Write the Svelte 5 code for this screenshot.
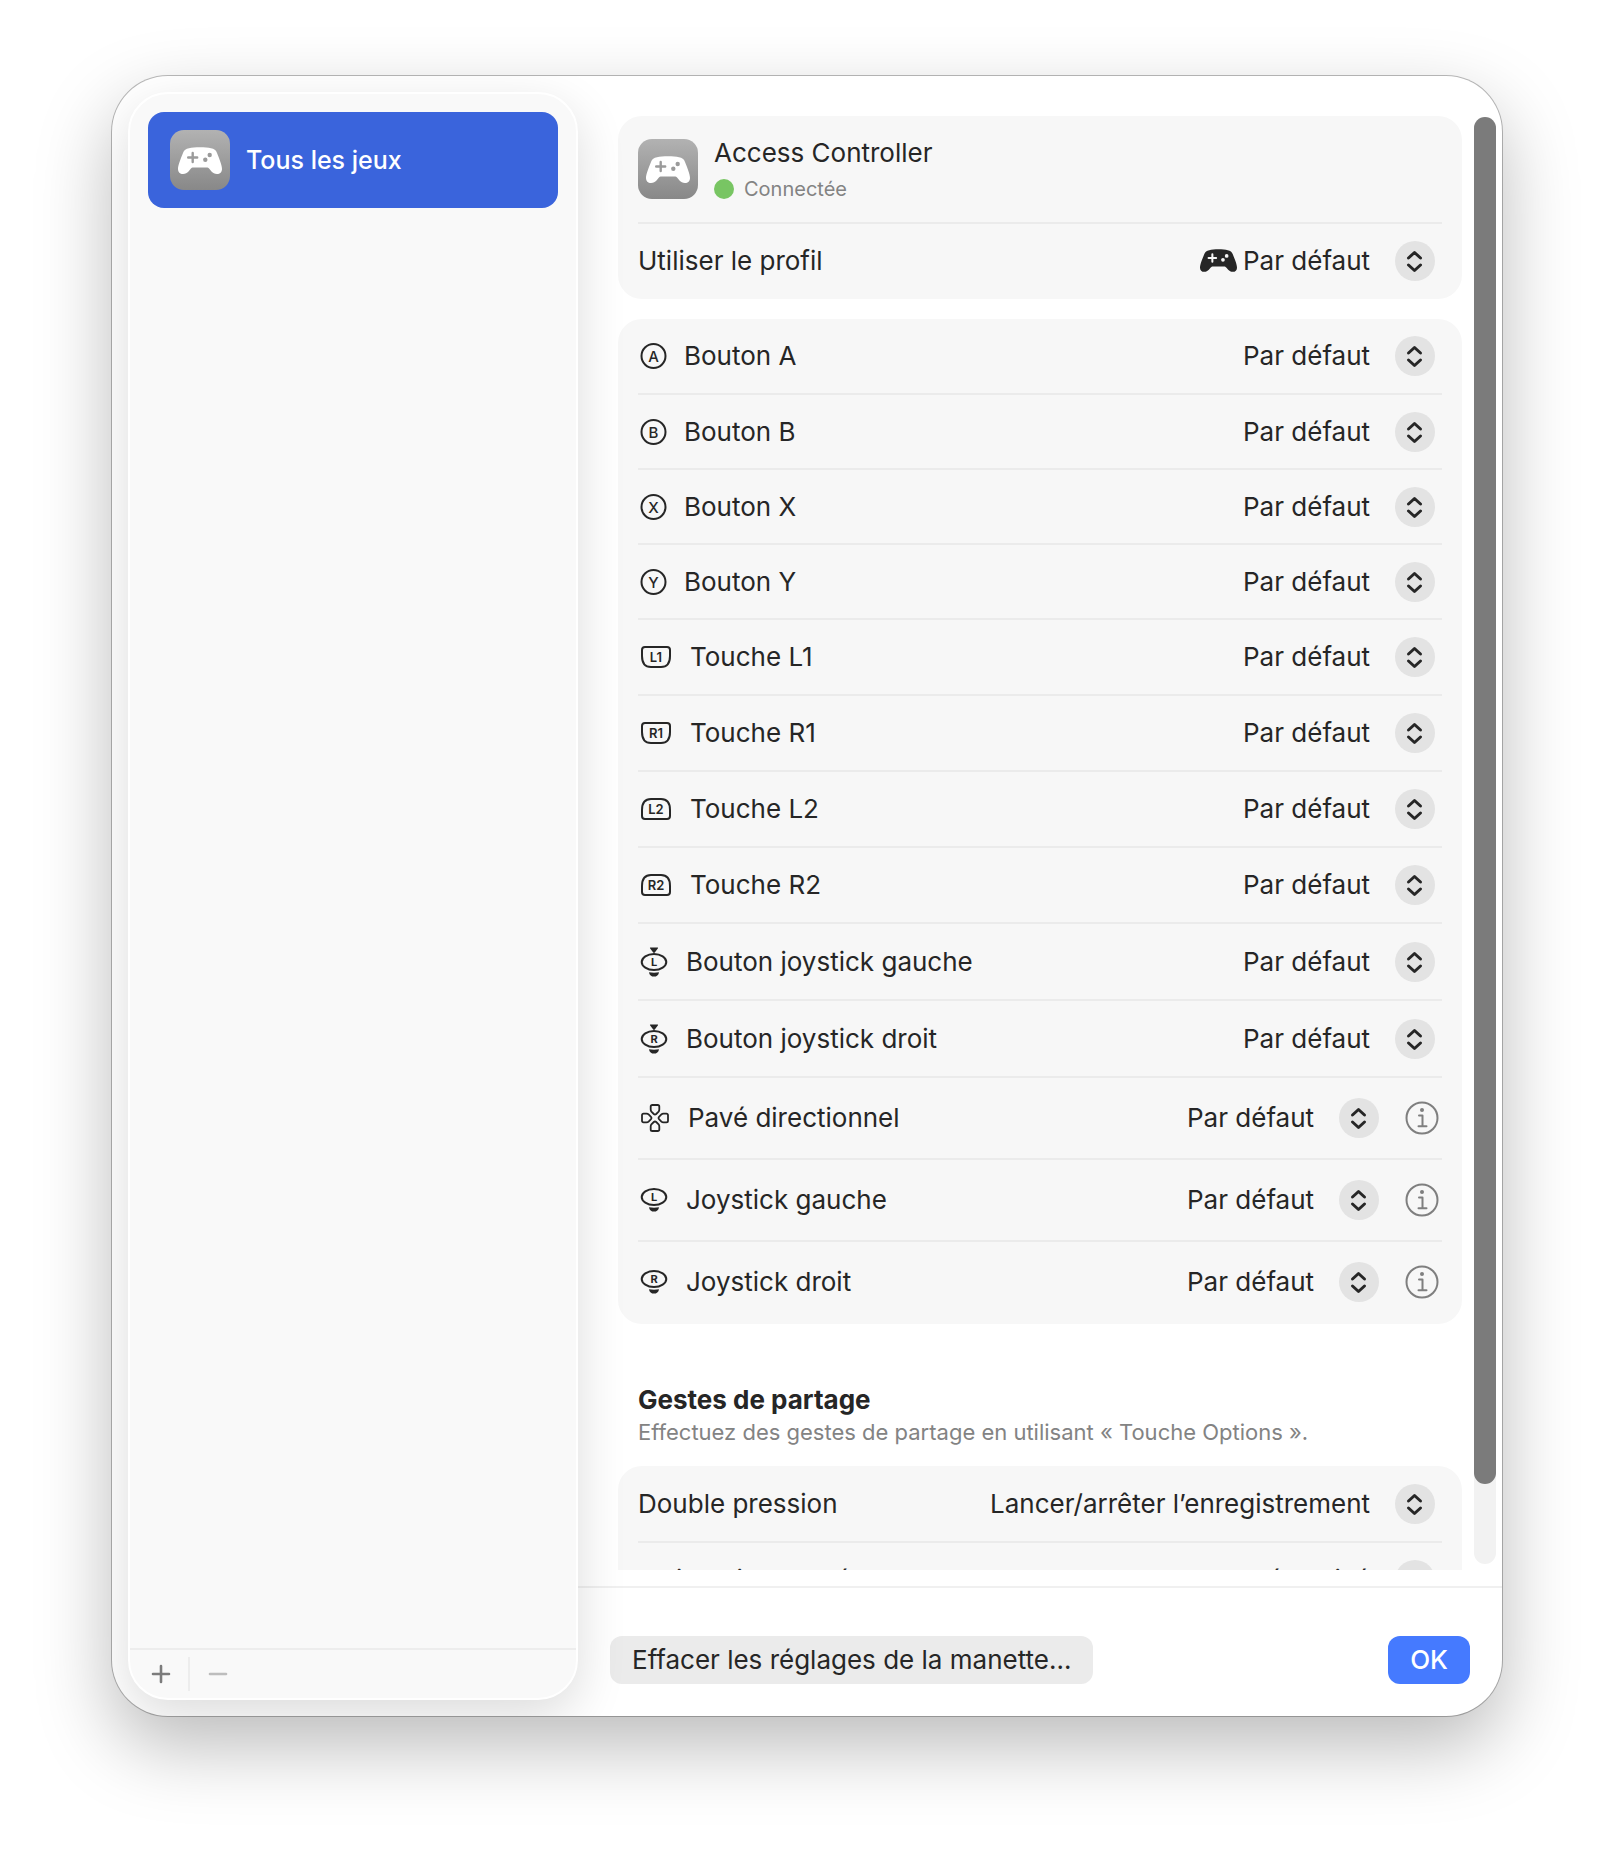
<script>
	const buttons = [
		{ id: 'a', label: 'Bouton A', icon: 'face', mark: 'A' },
		{ id: 'b', label: 'Bouton B', icon: 'face', mark: 'B' },
		{ id: 'x', label: 'Bouton X', icon: 'face', mark: 'X' },
		{ id: 'y', label: 'Bouton Y', icon: 'face', mark: 'Y' },
		{ id: 'l1', label: 'Touche L1', icon: 'bumper', mark: 'L1' },
		{ id: 'r1', label: 'Touche R1', icon: 'bumper', mark: 'R1' },
		{ id: 'l2', label: 'Touche L2', icon: 'trigger', mark: 'L2' },
		{ id: 'r2', label: 'Touche R2', icon: 'trigger', mark: 'R2' },
		{ id: 'l3', label: 'Bouton joystick gauche', icon: 'press', mark: 'L' },
		{ id: 'r3', label: 'Bouton joystick droit', icon: 'press', mark: 'R' },
		{ id: 'dpad', label: 'Pavé directionnel', icon: 'dpad', info: true },
		{ id: 'ls', label: 'Joystick gauche', icon: 'stick', mark: 'L', info: true },
		{ id: 'rs', label: 'Joystick droit', icon: 'stick', mark: 'R', info: true }
	];

	const gestures = [
		{ id: 'double', label: 'Double pression', value: 'Lancer/arrêter l’enregistrement' },
		{ id: 'hold', label: 'Maintenir appuyé', value: 'Désactivé' }
	];

	let scroller = $state();
	let thumbHeight = $state(94);
	let thumbTop = $state(0);

	function updateThumb() {
		if (!scroller) return;
		thumbHeight = (scroller.clientHeight / scroller.scrollHeight) * 100;
		thumbTop = (scroller.scrollTop / scroller.scrollHeight) * 100;
	}

	$effect(updateThumb);
</script>

<svelte:window onresize={updateThumb} />

{#snippet gamepad()}
	<svg class="gamepad" viewBox="0 0 44 27" aria-hidden="true">
		<path
			class="pad-body"
			d="M11 1.2C16-.2 28-.2 33 1.2c3 .4 5 1.8 6 4.800 2 5 5 12 5 16 0 3-2 5-5 5-2.500 0-4-1-5.500-2.500L31.500 22c-1-1.200-1.700-1.500-3-1.500h-13c-1.300 0-2 .3-3 1.500l-2 2.500C9 26 7.500 27 5 27c-3 0-5-2-5-5 0-4 3-11 5-16 1-3 3-4.400 6-4.800z"
		/>
		<path class="pad-cross" d="M14.700 6v9M10.200 10.500h9" />
		<circle class="pad-dot" cx="27.300" cy="12.700" r="2.200" />
		<circle class="pad-dot" cx="31.700" cy="8" r="2.200" />
	</svg>
{/snippet}

{#snippet glyph(icon, mark)}
	{#if icon === 'face'}
		<svg class="glyph" width="30" height="28" viewBox="0 0 30 28" aria-hidden="true">
			<circle cx="15.500" cy="14" r="12" />
			<text class="mark" x="15.500" y="19.500">{mark}</text>
		</svg>
	{:else if icon === 'bumper' || icon === 'trigger'}
		<svg class="glyph" width="36" height="24" viewBox="0 0 36 24" aria-hidden="true">
			{#if icon === 'bumper'}
				<path d="M7 2h22q3 0 3 3v6c0 8-4 11-9 11H13c-5 0-9-3-9-11V5q0-3 3-3z" />
			{:else}
				<path d="M7 22h22q3 0 3-3v-6c0-8-4-11-9-11H13c-5 0-9 3-9 11v6q0 3 3 3z" />
			{/if}
			<text class="mark small" x="18" y="16.500">{mark}</text>
		</svg>
	{:else if icon === 'press'}
		<svg class="glyph" width="32" height="30" viewBox="0 0 32 30" aria-hidden="true">
			<path class="solid" d="M12.300.5h7.400q.6 0 .3.700l-3.200 4.300q-.8.900-1.600 0L12 1.200q-.3-.7.300-.7z" />
			<ellipse cx="16" cy="15" rx="12.300" ry="8" />
			<path class="solid" d="M11 25.200q5 .9 10 0c-.3 3-2.500 4.400-5 4.400s-4.700-1.400-5-4.400z" />
			<text class="mark tiny" x="16" y="19">{mark}</text>
		</svg>
	{:else if icon === 'stick'}
		<svg class="glyph" width="32" height="24" viewBox="0 0 32 24" aria-hidden="true">
			<ellipse cx="16" cy="9" rx="12.300" ry="8" />
			<path class="solid" d="M11 19.200q5 .9 10 0c-.3 3-2.500 4.400-5 4.400s-4.700-1.400-5-4.400z" />
			<text class="mark tiny" x="16" y="13">{mark}</text>
		</svg>
	{:else}
		<svg class="glyph thin" width="34" height="30" viewBox="0 0 34 30" aria-hidden="true">
			{#each [0, 90, 180, 270] as angle}
				<path
					transform="rotate({angle} 17 15)"
					d="M14.300 2h5.400q1.600 0 1.600 1.600v3q0 1.200-.7 2l-2.400 2.400q-1.200 1.100-2.400 0l-2.400-2.400q-.7-.8-.7-2v-3q0-1.600 1.600-1.600z"
				/>
			{/each}
		</svg>
	{/if}
{/snippet}

{#snippet picker(id, value)}
	<span class="picker">
		<select {id}>
			<option>{value}</option>
		</select>
		<span class="stepper">
			<svg width="40" height="40" viewBox="0 0 40 40" aria-hidden="true">
				<path d="M13.500 17l6-5.500 6 5.500M13.500 24l6 5.500 6-5.500" />
			</svg>
		</span>
	</span>
{/snippet}

<div class="window">
	<aside class="sidebar">
		<nav>
			<a class="game" href="#all" aria-current="page">
				<span class="tile">{@render gamepad()}</span>
				Tous les jeux
			</a>
		</nav>
		<div class="toolbar">
			<button class="add" aria-label="Ajouter">
				<svg width="20" height="20" viewBox="0 0 20 20"><path d="M10 2v16M2 10h16" /></svg>
			</button>
			<button class="remove" aria-label="Supprimer" disabled>
				<svg width="20" height="20" viewBox="0 0 20 20"><path d="M2 10h16" /></svg>
			</button>
		</div>
	</aside>

	<main>
		<div class="content">
			<div class="scroller" bind:this={scroller} onscroll={updateThumb}>
				<section class="card">
					<div class="row device">
						<span class="tile">{@render gamepad()}</span>
						<div>
							<div class="name">Access Controller</div>
							<div class="status"><span class="led"></span>Connectée</div>
						</div>
					</div>
					<div class="row">
						<label for="profile">Utiliser le profil</label>
						<span class="profile">{@render gamepad()}</span>
						{@render picker('profile', 'Par défaut')}
					</div>
				</section>

				<section class="card">
					{#each buttons as { id, label, icon, mark, info } (id)}
						<div class="row {icon}">
							{@render glyph(icon, mark)}
							<label for={id}>{label}</label>
							{@render picker(id, 'Par défaut')}
							{#if info}
								<button class="info" aria-label="Informations">
									<svg width="34" height="34" viewBox="0 0 34 34">
										<circle cx="17" cy="17" r="15.500" />
										<circle class="dot" cx="17" cy="9" r="2" />
										<path d="M14 14.500h3.500V25M13.500 25.200h8" />
									</svg>
								</button>
							{/if}
						</div>
					{/each}
				</section>

				<header>
					<h2>Gestes de partage</h2>
					<p>Effectuez des gestes de partage en utilisant «&nbsp;Touche Options&nbsp;».</p>
				</header>
				<section class="card">
					{#each gestures as { id, label, value } (id)}
						<div class="row bumper">
							<label for={id}>{label}</label>
							{@render picker(id, value)}
						</div>
					{/each}
				</section>
			</div>
			<div class="track">
				<div class="thumb" style="height: {thumbHeight}%; top: {thumbTop}%"></div>
			</div>
		</div>

		<footer>
			<button class="push">Effacer les réglages de la manette…</button>
			<button class="push primary">OK</button>
		</footer>
	</main>
</div>

<style>
	:global(body) {
		margin: 0;
		background: #fff;
	}

	.window,
	.window * {
		box-sizing: border-box;
	}

	.window {
		display: flex;
		height: calc(100vh - 224px);
		min-height: 600px;
		margin: 76px 112px 148px;
		border-radius: 56px;
		background: #fff;
		box-shadow:
			0 0 0 1px rgba(0, 0, 0, 0.26),
			0 30px 76px rgba(0, 0, 0, 0.27);
		overflow: hidden;
		color: #262626;
		font-family: Inter, 'Liberation Sans', sans-serif;
		font-size: 26px;
		line-height: 32px;
	}

	button,
	select {
		margin: 0;
		padding: 0;
		border: 0;
		background: none;
		color: inherit;
		font: inherit;
	}

	svg {
		display: block;
		fill: none;
		stroke: currentColor;
		stroke-width: 2;
		stroke-linecap: round;
		stroke-linejoin: round;
	}

	.sidebar {
		position: relative;
		z-index: 1;
		display: flex;
		flex: 0 0 450px;
		flex-direction: column;
		justify-content: space-between;
		margin: 16px 0 16px 16px;
		border: 2px solid #fff;
		border-radius: 40px;
		background: #f9f9f9;
		box-shadow: 0 16px 50px rgba(0, 0, 0, 0.14);
	}

	nav {
		padding: 18px;
	}

	.game {
		display: flex;
		align-items: center;
		gap: 16px;
		height: 96px;
		padding: 0 22px;
		border-radius: 16px;
		background: #3a64dc;
		color: #fff;
		font-size: 25px;
		font-weight: 500;
		text-decoration: none;
	}

	.tile {
		display: flex;
		flex: none;
		align-items: center;
		justify-content: center;
		width: 60px;
		height: 60px;
		border-radius: 14px;
		background: linear-gradient(#b2b2b2, #888);
		color: #fff;
		--pad-detail: #9b9b9b;
	}

	.gamepad {
		width: 44px;
		height: 27px;
	}

	.pad-body {
		fill: currentColor;
		stroke: none;
	}

	.pad-cross {
		stroke: var(--pad-detail);
		stroke-width: 2.4;
	}

	.pad-dot {
		fill: var(--pad-detail);
		stroke: none;
	}

	.toolbar {
		display: flex;
		align-items: center;
		height: 50px;
		border-top: 2px solid #ededed;
		color: #7c7c7c;
	}

	.toolbar button {
		display: flex;
		align-items: center;
		justify-content: center;
		height: 34px;
	}

	.toolbar svg {
		stroke-width: 2.6;
	}

	.add {
		width: 60px;
		padding-left: 4px;
		border-right: 2px solid #ededed;
	}

	.remove {
		width: 56px;
		color: #bdbdbd;
	}

	main {
		display: flex;
		flex: 1;
		flex-direction: column;
		min-width: 0;
	}

	.content {
		display: flex;
		flex: 1;
		gap: 12px;
		min-height: 0;
		padding: 0 6px 16px 40px;
	}

	.scroller {
		flex: 1;
		min-width: 0;
		padding: 40px 0 38px;
		overflow-y: auto;
		scrollbar-width: none;
	}

	.track {
		position: relative;
		flex: 0 0 22px;
		margin: 41px 0 6px;
		border-radius: 11px;
		background: #f2f2f2;
	}

	.thumb {
		position: absolute;
		left: 0;
		right: 0;
		border-radius: 11px;
		background: #7b7b7b;
	}

	.card {
		padding: 0 20px;
		border-radius: 24px;
		background: #f7f7f7;
	}

	.card + .card {
		margin-top: 20px;
	}

	.row {
		display: flex;
		align-items: center;
		height: 75px;
		border-bottom: 2px solid #ebebeb;
	}

	.row.face:first-child {
		height: 76px;
	}

	.row.device {
		align-items: flex-start;
		gap: 16px;
		height: 108px;
		padding-top: 23px;
	}

	.row.bumper,
	.row.trigger {
		height: 76px;
	}

	.row.bumper:first-child,
	.row.press {
		height: 77px;
	}

	.row.dpad,
	.row.stick {
		height: 82px;
	}

	.row:last-child {
		border-bottom-color: transparent;
	}

	label {
		flex: 1;
		white-space: nowrap;
	}

	.device > div {
		margin-top: -2px;
	}

	.status {
		display: flex;
		align-items: center;
		gap: 10px;
		margin-top: 4px;
		color: #838383;
		font-size: 20px;
	}

	.led {
		width: 20px;
		height: 20px;
		border-radius: 50%;
		background: #78c563;
	}

	.profile {
		margin-right: 6px;
		--pad-detail: #f7f7f7;
	}

	.profile .gamepad {
		width: 37px;
		height: 23px;
	}

	.glyph {
		flex: none;
		margin-right: 16px;
	}

	.glyph.thin {
		stroke-width: 1.8;
	}

	.solid {
		fill: currentColor;
		stroke: none;
	}

	.mark {
		fill: currentColor;
		stroke: none;
		font-size: 15px;
		font-weight: 500;
		text-anchor: middle;
	}

	.mark.small {
		font-size: 13px;
		font-weight: 600;
	}

	.mark.tiny {
		font-size: 11px;
		font-weight: 700;
	}

	.picker {
		position: relative;
		margin-right: 7px;
	}

	select {
		display: block;
		height: 40px;
		padding-right: 64px;
		appearance: none;
		cursor: pointer;
	}

	.stepper {
		position: absolute;
		top: 0;
		right: 0;
		border-radius: 50%;
		background: #e3e3e3;
		pointer-events: none;
	}

	.stepper svg {
		stroke-width: 3;
	}

	.info {
		margin: 0 3px 0 19px;
		color: #7f7f7f;
	}

	.info .dot {
		fill: currentColor;
		stroke: none;
	}

	header {
		padding: 60px 20px 18px;
	}

	h2 {
		margin: 0;
		font-size: 26px;
		font-weight: 700;
		line-height: 32px;
	}

	p {
		margin: 0;
		color: #838383;
		font-size: 22px;
		line-height: 32px;
	}

	footer {
		display: flex;
		align-items: center;
		justify-content: space-between;
		height: 130px;
		padding: 16px 32px 0;
		border-top: 2px solid #f0f0f0;
	}

	.push {
		height: 48px;
		padding: 0 22px;
		border-radius: 12px;
		background: #ebebeb;
		white-space: nowrap;
	}

	.primary {
		background: #457aff;
		color: #fff;
		font-weight: 500;
	}
</style>
